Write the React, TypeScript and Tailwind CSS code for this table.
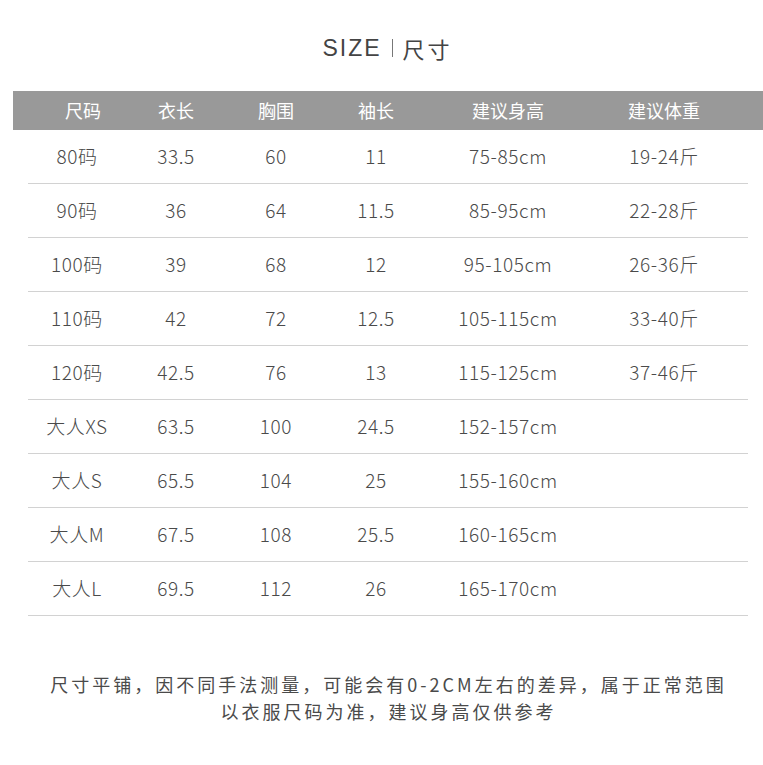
const header = ['尺码', '衣长', '胸围', '袖长', '建议身高', '建议体重']

const rows = [
  ['80码', '33.5', '60', '11', '75-85cm', '19-24斤'],
  ['90码', '36', '64', '11.5', '85-95cm', '22-28斤'],
  ['100码', '39', '68', '12', '95-105cm', '26-36斤'],
  ['110码', '42', '72', '12.5', '105-115cm', '33-40斤'],
  ['120码', '42.5', '76', '13', '115-125cm', '37-46斤'],
  ['大人XS', '63.5', '100', '24.5', '152-157cm', ''],
  ['大人S', '65.5', '104', '25', '155-160cm', ''],
  ['大人M', '67.5', '108', '25.5', '160-165cm', ''],
  ['大人L', '69.5', '112', '26', '165-170cm', ''],
]

const cols = 'grid grid-cols-[98px_100px_100px_100px_164px_148px_1fr] items-center'

export default function App() {
  return (
    <div className="w-[763px] h-[765px] bg-white overflow-hidden font-['Noto_Sans_CJK_SC','Noto_Sans',sans-serif]">
      <div className="pt-[34px] flex items-center justify-center gap-[10px] pl-[12px] h-[62px] text-[#444]">
        <span className="text-[23px] leading-[28px] tracking-[2px] font-['Liberation_Sans','Noto_Sans',sans-serif]">SIZE</span>
        <span className="w-px h-[18px] bg-[#777]" />
        <span className="text-[22px] leading-[28px] tracking-[3px]">尺寸</span>
      </div>

      <div className={`${cols} mt-[29px] ml-[13px] h-[39px] pl-[15px] bg-[#999999] text-white text-[18px]`}>
        {header.map((h, i) => (
          <div key={i} className={`text-center ${i === 0 ? 'pl-[12px]' : ''}`}>{h}</div>
        ))}
      </div>

      <div className="ml-[28px] w-[720px]">
        {rows.map((r, i) => (
          <div key={i} className={`${cols} h-[54px] border-b border-[#d2d2d2] text-[19px] tracking-[0.6px] font-light text-[#4a4a4a]`}>
            {r.map((c, j) => (
              <div key={j} className="text-center">{c}</div>
            ))}
          </div>
        ))}
      </div>

      <div className="mt-[55px] pl-[14px] text-center text-[18px] leading-[27px] tracking-[3px] text-[#4a4a4a]">
        <p>尺寸平铺，因不同手法测量，可能会有0-2CM左右的差异，属于正常范围</p>
        <p>以衣服尺码为准，建议身高仅供参考</p>
      </div>
    </div>
  )
}
